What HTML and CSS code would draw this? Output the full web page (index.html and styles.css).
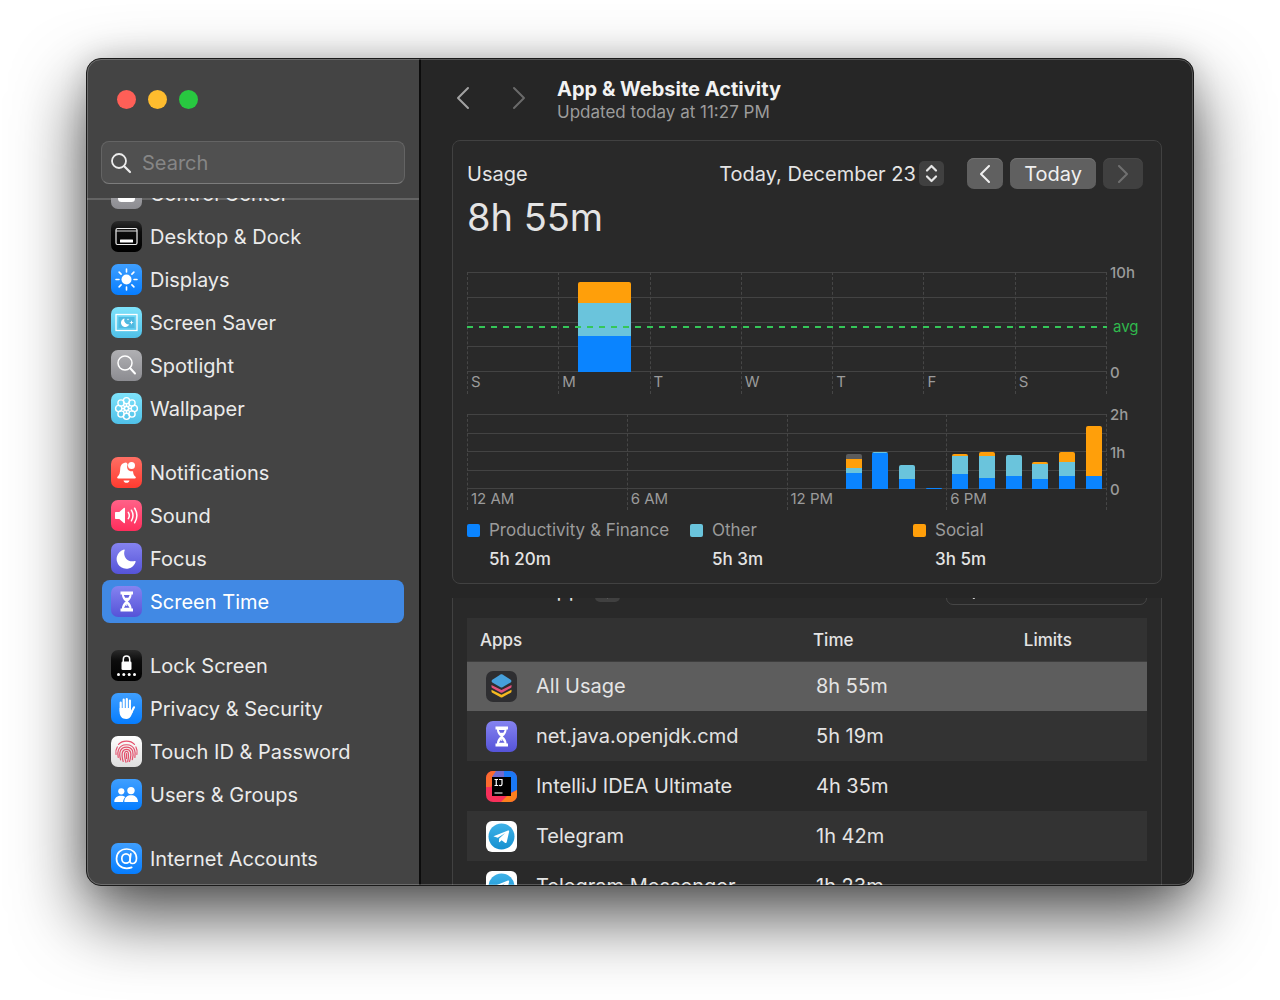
FILE: index.html
```html
<!DOCTYPE html>
<html lang="en">
<head>
<meta charset="utf-8">
<meta name="viewport" content="width=device-width, initial-scale=1">
<title>Screen Time</title>
<link rel="stylesheet" href="styles.css">
</head>
<body>
<svg class="defs" width="0" height="0" aria-hidden="true">
  <defs>
    <linearGradient id="g-black" x2="0" y2="1"><stop stop-color="#2b2b2b"/><stop offset=".35" stop-color="#0c0c0c"/><stop offset="1" stop-color="#000"/></linearGradient>
    <linearGradient id="g-blue" x2="0" y2="1"><stop stop-color="#3f9fff"/><stop offset="1" stop-color="#067dff"/></linearGradient>
    <linearGradient id="g-cyan" x2="0" y2="1"><stop stop-color="#7fe3fb"/><stop offset="1" stop-color="#4fc0e8"/></linearGradient>
    <linearGradient id="g-gray" x2="0" y2="1"><stop stop-color="#b0b0b3"/><stop offset="1" stop-color="#8c8c91"/></linearGradient>
    <linearGradient id="g-red" x2="0" y2="1"><stop stop-color="#ff6f64"/><stop offset="1" stop-color="#ff3b30"/></linearGradient>
    <linearGradient id="g-pink" x2="0" y2="1"><stop stop-color="#ff6288"/><stop offset="1" stop-color="#ff2d5c"/></linearGradient>
    <linearGradient id="g-indigo" x2="0" y2="1"><stop stop-color="#8583f0"/><stop offset="1" stop-color="#5553d8"/></linearGradient>
    <linearGradient id="g-white" x2="0" y2="1"><stop stop-color="#fff"/><stop offset="1" stop-color="#dedede"/></linearGradient>
    <linearGradient id="g-telegram" x2="0" y2="1"><stop stop-color="#3fb2e8"/><stop offset="1" stop-color="#1590d0"/></linearGradient>
    <clipPath id="c-tile"><rect width="31" height="31" rx="7"/></clipPath>

    <symbol id="i-hourglass" viewBox="0 0 31 31">
      <rect width="31" height="31" rx="7" fill="url(#g-indigo)"/>
      <path d="M9.500 5.500h12.500v3h-1.400c-.2 3.200-1.500 5.300-3.800 7 2.300 1.700 3.600 3.800 3.800 7h1.400v3H9.500v-3h1.400c.2-3.200 1.500-5.300 3.800-7-2.300-1.700-3.600-3.800-3.800-7H9.500z" fill="#fff"/>
      <path d="M12.800 9h5.900l-1.300 2.700h-3.300zM15.750 17.500l2.800 4.300h-5.600z" fill="#6664df"/>
      <path d="M15.750 15v5" stroke="#fff"/>
    </symbol>
    <symbol id="i-telegram" viewBox="0 0 31 31">
      <rect width="31" height="31" rx="6" fill="#fff"/>
      <circle cx="15.500" cy="15.500" r="13" fill="url(#g-telegram)"/>
      <path d="M7.500 15.300 22 9.600c.8-.3 1.300.2 1.100 1.100l-2.400 10.600c-.2.800-.8 1-1.500.6l-3.600-2.700-1.800 1.800c-.5.400-.9.200-.9-.4l.3-3.100 6-5.500-7.400 4.700-3.900-1.200c-.5-.1-.5-.2-.4-.2z" fill="#fff"/>
    </symbol>
    <symbol id="i-steps" viewBox="0 0 25 25">
      <path d="M8 9.500l4.500-4.500L17 9.500M8 15.500l4.500 4.500L17 15.500" fill="none" stroke="#e6e6e6" stroke-width="2.200" stroke-linecap="round" stroke-linejoin="round"/>
    </symbol>
    <symbol id="i-search" viewBox="0 0 22 22">
      <circle cx="9" cy="9" r="7" fill="none" stroke="currentColor" stroke-width="1.800"/>
      <path d="M14.200 14.200l5.800 5.800" stroke="currentColor" stroke-width="2.200" stroke-linecap="round"/>
    </symbol>
  </defs>
</svg>

<div class="window">
  <aside class="sidebar">
    <div class="sidebar-head">
      <div class="lights">
        <button class="light close" aria-label="Close"></button>
        <button class="light minimise" aria-label="Minimise"></button>
        <button class="light zoom" aria-label="Zoom"></button>
      </div>
      <label class="search">
        <svg width="22" height="22" aria-hidden="true"><use href="#i-search"/></svg>
        <input type="search" placeholder="Search" aria-label="Search">
      </label>
    </div>

    <nav class="list" aria-label="Settings">
      <div class="group">
        <a class="item" href="#">
          <svg class="tile" viewBox="0 0 31 31" aria-hidden="true"><rect width="31" height="31" rx="7" fill="url(#g-gray)"/><rect x="7" y="7" width="17" height="7" rx="3.500" fill="#fff"/><rect x="7" y="17" width="17" height="7" rx="3.500" fill="#fff"/></svg>
          Control Center</a>
        <a class="item" href="#">
          <svg class="tile" viewBox="0 0 31 31" aria-hidden="true"><rect width="31" height="31" rx="7" fill="url(#g-black)"/><rect x="5" y="7.500" width="21" height="16" rx="1.500" fill="none" stroke="#eee" stroke-width="1.200"/><path d="M5 10h21" stroke="#ddd"/><rect x="9" y="18.500" width="13" height="3" rx=".5" fill="#fff"/></svg>
          Desktop &amp; Dock</a>
        <a class="item" href="#">
          <svg class="tile" viewBox="0 0 31 31" aria-hidden="true"><rect width="31" height="31" rx="7" fill="url(#g-blue)"/><circle cx="15.500" cy="15.500" r="5" fill="#fff"/><path d="M15.500 5v3M15.500 23v3M5 15.500h3M23 15.500h3M8.100 8.100l2 2M20.900 20.900l2 2M8.100 22.900l2-2M20.900 10.100l2-2" stroke="#fff" stroke-width="1.600" stroke-linecap="round"/></svg>
          Displays</a>
        <a class="item" href="#">
          <svg class="tile" viewBox="0 0 31 31" aria-hidden="true"><rect width="31" height="31" rx="7" fill="url(#g-cyan)"/><rect x="5" y="7.500" width="21" height="16" fill="none" stroke="#fff" stroke-width="1.300"/><rect x="7.500" y="10" width="16" height="11" fill="#4fb9e0"/><path d="M13.500 11.500a4.300 4.300 0 1 0 4.800 5.800 4.300 4.300 0 0 1-4.800-5.800z" fill="#fff"/><path d="M20.500 13.200l.6 1.700 1.700.6-1.700.6-.6 1.700-.6-1.700-1.700-.6 1.700-.6zM17 11.200l.3.900.9.300-.9.300-.3.900-.3-.9-.9-.3.900-.3z" fill="#fff"/></svg>
          Screen Saver</a>
        <a class="item" href="#">
          <svg class="tile" viewBox="0 0 31 31" aria-hidden="true"><rect width="31" height="31" rx="7" fill="url(#g-gray)"/><circle cx="14" cy="13" r="7" fill="none" stroke="#fff" stroke-width="1.500"/><path d="M19 18l5 5.500" stroke="#fff" stroke-width="2" stroke-linecap="round"/></svg>
          Spotlight</a>
        <a class="item" href="#">
          <svg class="tile" viewBox="0 0 31 31" aria-hidden="true"><rect width="31" height="31" rx="7" fill="url(#g-cyan)"/><g fill="none" stroke="#fff" stroke-width="1.400"><circle cx="15.500" cy="7.700" r="3.100"/><circle cx="21" cy="10" r="3.100"/><circle cx="23.300" cy="15.500" r="3.100"/><circle cx="21" cy="21" r="3.100"/><circle cx="15.500" cy="23.300" r="3.100"/><circle cx="10" cy="21" r="3.100"/><circle cx="7.700" cy="15.500" r="3.100"/><circle cx="10" cy="10" r="3.100"/><path d="M15.500 10.800v9.400M10.800 15.500h9.400M12.200 12.200l6.600 6.600M12.200 18.800l6.600-6.600"/></g><circle cx="15.500" cy="15.500" r="3" fill="#fff"/><circle cx="15.500" cy="15.500" r="1.200" fill="#5ccbee"/></svg>
          Wallpaper</a>
      </div>
      <div class="group">
        <a class="item" href="#">
          <svg class="tile" viewBox="0 0 31 31" aria-hidden="true"><rect width="31" height="31" rx="7" fill="url(#g-red)"/><path d="M15 5.500c-4 .3-5.600 3-5.800 6.500-.2 4-.6 5.800-2.700 7.800-.7.800-.3 1.700.7 1.700h16.600c1 0 1.400-.9.700-1.700-1.600-1.500-2.300-3-2.500-5.600-4 1-7-2.500-5.500-6.200.2-.8-.2-2-1.500-2.500z" fill="#fff"/><circle cx="20.500" cy="8.500" r="3.500" fill="#fff"/><path d="M12.500 23.500h6c-.3 1.500-1.500 2.300-3 2.300s-2.700-.8-3-2.300z" fill="#fff"/></svg>
          Notifications</a>
        <a class="item" href="#">
          <svg class="tile" viewBox="0 0 31 31" aria-hidden="true"><rect width="31" height="31" rx="7" fill="url(#g-pink)"/><path d="M5 12h3.300l4.500-3.900c.7-.5 1.200-.2 1.200.5v13.800c0 .7-.5 1-1.200.5L8.300 19H5c-.7 0-1-.4-1-1v-5c0-.6.300-1 1-1z" fill="#fff"/><path d="M17.300 12.300c1.300 2 1.300 4.400 0 6.400M20.400 10.200c2 3.300 2 7.300 0 10.600M23.600 8.200c2.900 4.600 2.900 10 0 14.600" fill="none" stroke="#fff" stroke-width="1.500" stroke-linecap="round"/></svg>
          Sound</a>
        <a class="item" href="#">
          <svg class="tile" viewBox="0 0 31 31" aria-hidden="true"><rect width="31" height="31" rx="7" fill="url(#g-indigo)"/><path d="M13 6.600c.5-.2.900.2.700.7-2.300 6.200 3 12.700 10.200 10.700.6-.1 1 .3.700.9A9.700 9.700 0 1 1 13 6.600z" fill="#fff"/></svg>
          Focus</a>
        <a class="item selected" href="#" aria-current="page">
          <svg class="tile" aria-hidden="true"><use href="#i-hourglass"/></svg>
          Screen Time</a>
      </div>
      <div class="group">
        <a class="item" href="#">
          <svg class="tile" viewBox="0 0 31 31" aria-hidden="true"><rect width="31" height="31" rx="7" fill="url(#g-black)"/><rect x="10.500" y="11.500" width="10" height="8.500" rx="1.300" fill="#fff"/><path d="M12.300 12V9.200a3.200 3.200 0 0 1 6.400 0V12" fill="none" stroke="#fff" stroke-width="1.500"/><g fill="#fff"><circle cx="7.500" cy="24.500" r="1.500"/><circle cx="12.800" cy="24.500" r="1.500"/><circle cx="18.200" cy="24.500" r="1.500"/><circle cx="23.500" cy="24.500" r="1.500"/></g></svg>
          Lock Screen</a>
        <a class="item" href="#">
          <svg class="tile" viewBox="0 0 31 31" aria-hidden="true"><rect width="31" height="31" rx="7" fill="url(#g-blue)"/><g stroke="#fff" stroke-width="2.200" stroke-linecap="round" fill="none"><path d="M9.700 9.500V18M12.700 6.700V17M15.800 6V17M18.900 7.500V18M23 14.300 20 20"/></g><path d="M8.600 15h11.400v3l2 .5-1.500 3.500c-1.100 2.500-2.700 4-5.300 4-4.200 0-6.600-2.800-6.600-7z" fill="#fff"/></svg>
          Privacy &amp; Security</a>
        <a class="item" href="#">
          <svg class="tile" viewBox="0 0 31 31" aria-hidden="true"><rect width="31" height="31" rx="7" fill="url(#g-white)"/><g fill="none" stroke="#e4506c" stroke-width="1.200" stroke-linecap="round"><path d="M7.500 8.300c4-4.300 12-4.300 16 0M5 18.500c-.6-3 0-5.500 1.300-7.500M25.900 18.500c.6-3 .2-5.300-1-7.500M7.200 21.500c-.6-3-.6-5.500.2-7.500 2.500-7 13.700-7 16.200 0 .8 2.200.8 4.500.3 7.500M9.600 23.800c-1-3.500-1.200-6.500-.2-9 2.200-5 10-5 12.200 0 .8 2.500.6 5.500-.3 8.800M12.200 25.500c-1.200-4-1.500-7-.7-9.500 1.400-3.500 6.600-3.500 8 0 .7 2.500.2 6-1 9.500M15 26.200c-1.300-4-1.800-7-1.300-9.300.6-2 3-2 3.600 0 .5 2.500 0 6-.6 8.700M15.500 17.500v5"/></g></svg>
          Touch ID &amp; Password</a>
        <a class="item" href="#">
          <svg class="tile" viewBox="0 0 31 31" aria-hidden="true"><rect width="31" height="31" rx="7" fill="url(#g-blue)"/><g fill="#fff"><circle cx="10.300" cy="12.300" r="3.100"/><circle cx="20" cy="11.600" r="3.700"/><path d="M4 23c-.6 0-.8-.4-.7-1 .5-3.500 3.300-5.300 6.700-5.300 1.700 0 3.200.4 4.300 1.300-1.300 1.200-2.100 3-2.200 5zM14 23c-.6 0-.8-.4-.7-1 .5-3.700 3.200-5.700 6.800-5.700s6.400 2 6.900 5.700c.1.600-.1 1-.7 1z"/></g></svg>
          Users &amp; Groups</a>
      </div>
      <div class="group">
        <a class="item" href="#">
          <svg class="tile" viewBox="0 0 31 31" aria-hidden="true"><rect width="31" height="31" rx="7" fill="url(#g-blue)"/><g fill="none" stroke="#fff" stroke-width="1.700" stroke-linecap="round"><ellipse cx="15" cy="15.500" rx="4.200" ry="4.700"/><path d="M19.800 10.800 19 17.500c-.2 2 .8 3 2.300 3 2.600 0 4.200-2.300 4.200-5.300 0-5.400-4.100-9.200-9.700-9.200-6 0-10.300 4-10.300 9.700 0 5.800 4.200 9.600 10.300 9.600 1.900 0 3.500-.3 4.900-.9"/></g></svg>
          Internet Accounts</a>
      </div>
    </nav>
  </aside>

  <main class="main">
    <header class="main-head">
      <button class="nav-btn" aria-label="Back"><svg width="14" height="24" viewBox="0 0 14 24" aria-hidden="true"><path d="M12 2 2 12l10 10"/></svg></button>
      <button class="nav-btn dim" aria-label="Forward"><svg width="14" height="24" viewBox="0 0 14 24" aria-hidden="true"><path d="M2 2l10 10L2 22"/></svg></button>
      <div class="titles">
        <h1>App &amp; Website Activity</h1>
        <p>Updated today at 11:27 PM</p>
      </div>
    </header>

    <section class="card">
      <div class="usage-bar">
        <h2>Usage</h2>
        <div class="picker">
          <select aria-label="Date"><option>Today, December 23</option></select>
          <svg class="steps" aria-hidden="true"><use href="#i-steps"/></svg>
        </div>
        <div class="day-nav">
          <button class="btn prev" aria-label="Previous day"><svg width="10" height="18" viewBox="0 0 10 18" aria-hidden="true"><path d="M9 1 1 9l8 8"/></svg></button>
          <button class="btn">Today</button>
          <button class="btn next" aria-label="Next day" disabled><svg width="10" height="18" viewBox="0 0 10 18" aria-hidden="true"><path d="M1 1l8 8-8 8"/></svg></button>
        </div>
      </div>
      <p class="total">8h 55m</p>

      <div class="chart week">
        <div class="rules"><i></i><i></i><i></i><i></i><i></i></div>
        <div class="ticks"><span>S</span><span>M</span><span>T</span><span>W</span><span>T</span><span>F</span><span>S</span></div>
        <div class="bars">
          <div></div>
          <div class="bar"><i class="social" style="height:21px"></i><i class="other" style="height:33px"></i><i class="work" style="height:36px"></i></div>
          <div></div><div></div><div></div><div></div><div></div>
        </div>
        <div class="scale"><span>10h</span><span>0</span></div>
        <div class="average"><i></i><span>avg</span></div>
      </div>

      <div class="chart day">
        <div class="rules"><i></i><i></i><i></i><i></i><i></i></div>
        <div class="ticks"><span>12 AM</span><span>6 AM</span><span>12 PM</span><span>6 PM</span></div>
        <div class="bars">
          <div></div><div></div><div></div><div></div><div></div><div></div><div></div>
          <div></div><div></div><div></div><div></div><div></div><div></div><div></div>
          <div class="bar"><i class="rest" style="height:5px"></i><i class="social" style="height:9px"></i><i class="other" style="height:5px"></i><i class="work" style="height:16px"></i></div>
          <div class="bar"><i class="other" style="height:1px"></i><i class="work" style="height:36px"></i></div>
          <div class="bar"><i class="other" style="height:14px"></i><i class="work" style="height:10px"></i></div>
          <div class="bar"><i class="work" style="height:1px"></i></div>
          <div class="bar"><i class="social" style="height:2px"></i><i class="other" style="height:18px"></i><i class="work" style="height:15px"></i></div>
          <div class="bar"><i class="social" style="height:4px"></i><i class="other" style="height:22px"></i><i class="work" style="height:11px"></i></div>
          <div class="bar"><i class="other" style="height:21px"></i><i class="work" style="height:13px"></i></div>
          <div class="bar"><i class="social" style="height:2px"></i><i class="other" style="height:15px"></i><i class="work" style="height:10px"></i></div>
          <div class="bar"><i class="social" style="height:10px"></i><i class="other" style="height:14px"></i><i class="work" style="height:13px"></i></div>
          <div class="bar"><i class="social" style="height:50px"></i><i class="work" style="height:13px"></i></div>
        </div>
        <div class="scale"><span>2h</span><span>1h</span><span>0</span></div>
      </div>

      <dl class="legend">
        <div><dt><i class="work"></i>Productivity &amp; Finance</dt><dd>5h 20m</dd></div>
        <div><dt><i class="other"></i>Other</dt><dd>5h 3m</dd></div>
        <div><dt><i class="social"></i>Social</dt><dd>3h 5m</dd></div>
      </dl>
    </section>

    <section class="scroller">
      <div class="card apps">
        <div class="apps-bar">
          <label for="show">Show</label>
          <div class="picker">
            <select id="show"><option>Apps</option></select>
            <svg class="steps" aria-hidden="true"><use href="#i-steps"/></svg>
          </div>
          <label class="filter">
            <svg width="22" height="22" aria-hidden="true"><use href="#i-search"/></svg>
            <input type="search" placeholder="Search" aria-label="Search apps">
          </label>
        </div>
        <table>
          <thead><tr><th>Apps</th><th>Time</th><th>Limits</th></tr></thead>
          <tbody>
            <tr class="selected"><td><div class="app">
              <svg class="tile" viewBox="0 0 31 31" aria-hidden="true"><rect width="31" height="31" rx="7" fill="#2e2e31"/><path d="M5.500 18.800l10 5 10-5v1.700c0 .5-.3.900-.8 1.200l-8.200 4.500c-.7.400-1.300.4-2 0l-8.200-4.500c-.5-.3-.8-.7-.8-1.200z" fill="#f5b920"/><path d="M5.500 14l10 5 10-5v1.700c0 .5-.3.900-.8 1.200l-8.200 4.500c-.7.400-1.300.4-2 0l-8.200-4.500c-.5-.3-.8-.7-.8-1.200z" fill="#e3527c"/><path d="M14.500 3.500c.7-.4 1.300-.4 2 0l8.200 5.200c1 .7 1 2.100 0 2.700l-8.200 4.900c-.7.400-1.300.4-2 0l-8.200-4.900c-1-.6-1-2 0-2.700z" fill="#46a0dc"/></svg>
              All Usage</div></td><td>8h 55m</td><td></td></tr>
            <tr><td><div class="app">
              <svg class="tile" aria-hidden="true"><use href="#i-hourglass"/></svg>
              net.java.openjdk.cmd</div></td><td>5h 19m</td><td></td></tr>
            <tr><td><div class="app">
              <svg class="tile" viewBox="0 0 31 31" aria-hidden="true"><g clip-path="url(#c-tile)"><rect width="31" height="31" fill="#f7305a"/><path d="M0 0h14L5 16H0z" fill="#fc6b2f"/><path d="M12 0h19v19l-9 4z" fill="#1a78f5"/><path d="M10 0 6 6h12V0z" fill="#6f6bd0"/><path d="M31 19v12H15l7-7z" fill="#fc801d"/></g><rect x="6" y="6" width="19" height="19" fill="#000"/><path d="M8.500 8.500h3.500M8.500 14.500h3.500M10.250 8.500v6M13 8.500h3v4.500c0 1.200-.8 1.600-1.500 1.600s-1.200-.2-1.500-.6M8.500 22h8" fill="none" stroke="#fff" stroke-width="1.200"/></svg>
              IntelliJ IDEA Ultimate</div></td><td>4h 35m</td><td></td></tr>
            <tr><td><div class="app">
              <svg class="tile" aria-hidden="true"><use href="#i-telegram"/></svg>
              Telegram</div></td><td>1h 42m</td><td></td></tr>
            <tr><td><div class="app">
              <svg class="tile" aria-hidden="true"><use href="#i-telegram"/></svg>
              Telegram Messenger</div></td><td>1h 23m</td><td></td></tr>
          </tbody>
        </table>
      </div>
    </section>
  </main>
</div>
</body>
</html>
```
FILE: styles.css
```css
* {
  box-sizing: border-box;
}

body {
  margin: 0;
  height: 100vh;
  padding: 58px 86px 114px;
  overflow: hidden;
  background: #fff;
  color: #e4e4e4;
  font: 20px/24px Inter, "Liberation Sans", sans-serif;
}

h1, h2, p, dl, dd {
  margin: 0;
}

button, input, select {
  border: 0;
  padding: 0;
  background: none;
  color: inherit;
  font: inherit;
  appearance: none;
}

.defs {
  display: block;
  height: 0;
}

/* Window frame */

.window {
  position: relative;
  display: flex;
  height: 100%;
  border: 1px solid #1a1a1a;
  border-radius: 15px;
  overflow: hidden;
  background: #262626;
  box-shadow: 0 30px 70px rgba(0, 0, 0, 0.7), 0 0 28px rgba(0, 0, 0, 0.14);
}

.window::after {
  content: "";
  position: absolute;
  inset: 0;
  border: 1px solid rgba(255, 255, 255, 0.22);
  border-radius: 14px;
  pointer-events: none;
}

/* Sidebar */

.sidebar {
  display: flex;
  flex: none;
  flex-direction: column;
  width: 334px;
  border-right: 2px solid #0c0c0c;
  background: #444;
}

.sidebar-head {
  flex: none;
  padding: 31px 14px 14px;
}

.lights {
  display: flex;
  gap: 12px;
  padding-left: 16px;
}

.light {
  width: 19px;
  height: 19px;
  border-radius: 50%;
}

.close { background: #ff5f57; }
.minimise { background: #febc2e; }
.zoom { background: #28c840; }

.search {
  display: flex;
  align-items: center;
  gap: 10px;
  height: 43px;
  margin-top: 32px;
  padding: 0 8px;
  border: 1px solid #646464;
  border-bottom-color: #7c7c7c;
  border-radius: 8px;
  background: #505050;
  color: #ececec;
}

.search input {
  flex: 1;
  min-width: 0;
  outline: 0;
}

.search input::placeholder {
  color: #868686;
}

.list {
  flex: 1;
  min-height: 0;
  overflow: hidden;
  padding: 0 15px;
  box-shadow: inset 0 2px #646464;
}

.group {
  margin-bottom: 21px;
}

.group:first-child {
  margin-top: -26px;
}

.item {
  display: flex;
  align-items: center;
  gap: 8px;
  height: 43px;
  padding: 0 9px;
  border-radius: 8px;
  color: #ebebeb;
  text-decoration: none;
  white-space: nowrap;
}

.item.selected {
  background: #4189e4;
  color: #fff;
}

.tile {
  flex: none;
  width: 31px;
  height: 31px;
}

/* Main pane */

.main {
  display: flex;
  flex: 1;
  flex-direction: column;
  min-width: 0;
  padding: 0 31px;
}

.main-head {
  display: flex;
  flex: none;
  align-items: center;
  height: 81px;
  padding-left: 4px;
}

.nav-btn {
  display: flex;
  width: 14px;
  margin: 0 42px 3px 0;
  color: #a2a2a2;
}

.nav-btn.dim {
  margin-right: 31px;
  color: #6a6a6a;
}

.nav-btn path {
  fill: none;
  stroke: currentColor;
  stroke-width: 2;
  stroke-linecap: round;
  stroke-linejoin: round;
}

.titles {
  padding-top: 2px;
}

.titles h1 {
  color: #f2f2f2;
  font-size: 20px;
  line-height: 23px;
}

.titles p {
  color: #9c9c9c;
  font-size: 17px;
  line-height: 23px;
}

.card {
  flex: none;
  border: 1px solid #414141;
  border-radius: 8px;
  background: #292929;
  padding: 17px 14px 9px;
}

.usage-bar {
  display: flex;
  align-items: center;
  height: 31px;
  padding-right: 4px;
}

.usage-bar h2 {
  margin-right: auto;
  font-size: 20px;
  font-weight: 400;
}

.picker {
  display: grid;
  align-items: center;
}

.picker select,
.steps {
  grid-area: 1 / 1;
}

.picker select {
  padding-right: 28px;
}

.steps {
  justify-self: end;
  width: 25px;
  height: 25px;
  border-radius: 5px;
  background: #404040;
  pointer-events: none;
}

.day-nav {
  display: flex;
  gap: 7px;
  margin-left: 23px;
}

.btn {
  display: flex;
  align-items: center;
  justify-content: center;
  height: 31px;
  padding: 0 14px;
  border-radius: 7px;
  background: #606060;
  box-shadow: inset 0 1px #717171;
  color: #f0f0f0;
}

.btn.prev {
  padding: 0 13px;
}

.btn.next {
  padding: 0 15px;
}

.btn:disabled {
  background: #404040;
  box-shadow: inset 0 1px #484848;
  color: #707070;
}

.btn path {
  fill: none;
  stroke: currentColor;
  stroke-width: 2;
  stroke-linecap: round;
  stroke-linejoin: round;
}

.total {
  margin-top: 4px;
  font-size: 38px;
  line-height: 48px;
}

/* Charts: grid rules, day or hour ticks and bars share one cell */

.chart {
  display: grid;
  grid-template-columns: 1fr 40px;
  font-size: 15px;
  line-height: 20px;
  color: #9b9b9b;
}

.week {
  height: 122px;
  margin-top: 31px;
}

.day {
  height: 96px;
  margin-top: 20px;
}

.rules,
.ticks,
.bars {
  grid-area: 1 / 1;
}

.rules,
.bars {
  height: 100px;
}

.day .rules,
.day .bars {
  height: 75px;
}

.rules {
  display: flex;
  flex-direction: column;
  justify-content: space-between;
}

.rules i {
  height: 1px;
  background: #434343;
}

.ticks,
.bars {
  display: grid;
  grid-auto-columns: 1fr;
  grid-auto-flow: column;
}

.ticks {
  border-right: 1px dashed #464646;
}

.ticks span {
  display: flex;
  align-items: flex-end;
  padding: 0 3px 2px;
  border-left: 1px dashed #464646;
}

.day .ticks span {
  padding-bottom: 1px;
}

.bar {
  display: flex;
  flex-direction: column;
  align-self: end;
  justify-self: center;
  width: 58%;
  border-radius: 2px 2px 0 0;
  overflow: hidden;
}

.day .bar {
  width: 16px;
}

.work { background: #0a84ff; }
.other { background: #6ac4dc; }
.social { background: #ff9f0a; }
.rest { background: #5c5c5c; }

.scale {
  display: flex;
  grid-area: 1 / 2;
  flex-direction: column;
  justify-content: space-between;
  height: 120px;
  margin-top: -9px;
  padding-left: 3px;
  font-weight: 500;
}

.day .scale {
  height: 95px;
}

.average {
  display: flex;
  grid-area: 1 / 1 / 2 / 3;
  align-items: center;
  height: 20px;
  margin-top: 45px;
  color: #30b94d;
}

.average i {
  flex: 1;
  height: 2px;
  background: repeating-linear-gradient(90deg, #35c759 0 6px, transparent 6px 12px);
}

.average span {
  width: 40px;
  padding-left: 6px;
}

.legend {
  display: flex;
  margin-top: 6px;
  font-size: 17px;
  line-height: 29px;
}

.legend div {
  width: 223px;
}

.legend dt {
  display: flex;
  align-items: center;
  gap: 9px;
  color: #9b9b9b;
  white-space: nowrap;
}

.legend i {
  width: 13px;
  height: 13px;
  border-radius: 2px;
}

.legend dd {
  padding-left: 22px;
  font-weight: 500;
}

/* Apps list, scrolled under the usage card */

.scroller {
  flex: 1;
  min-height: 0;
  margin-top: 14px;
  overflow: hidden;
}

.apps {
  margin-top: -41px;
  padding-top: 16px;
}

.apps-bar {
  display: flex;
  align-items: center;
  gap: 23px;
  height: 31px;
  margin-bottom: 13px;
}

.filter {
  display: flex;
  align-items: center;
  width: 201px;
  height: 31px;
  margin-left: auto;
  padding-left: 9px;
  border: 1px solid #464646;
  border-radius: 7px;
}

.filter input {
  width: 100%;
}

table {
  width: 100%;
  border-collapse: collapse;
  table-layout: fixed;
}

th {
  width: 31%;
  height: 43px;
  padding: 1px 6px 0;
  border-bottom: 1px solid #3e3e3e;
  background: #323232;
  font-size: 17px;
  font-weight: 500;
  text-align: left;
}

th:first-child {
  width: 50%;
  padding-left: 13px;
}

th:last-child {
  width: 19%;
}

td {
  height: 50px;
  padding: 0 9px;
}

td:first-child {
  padding-left: 19px;
}

tbody tr:nth-child(even) {
  background: #333;
}

tbody .selected {
  background: #5d5d5d;
}

.app {
  display: flex;
  align-items: center;
  gap: 19px;
}
```
